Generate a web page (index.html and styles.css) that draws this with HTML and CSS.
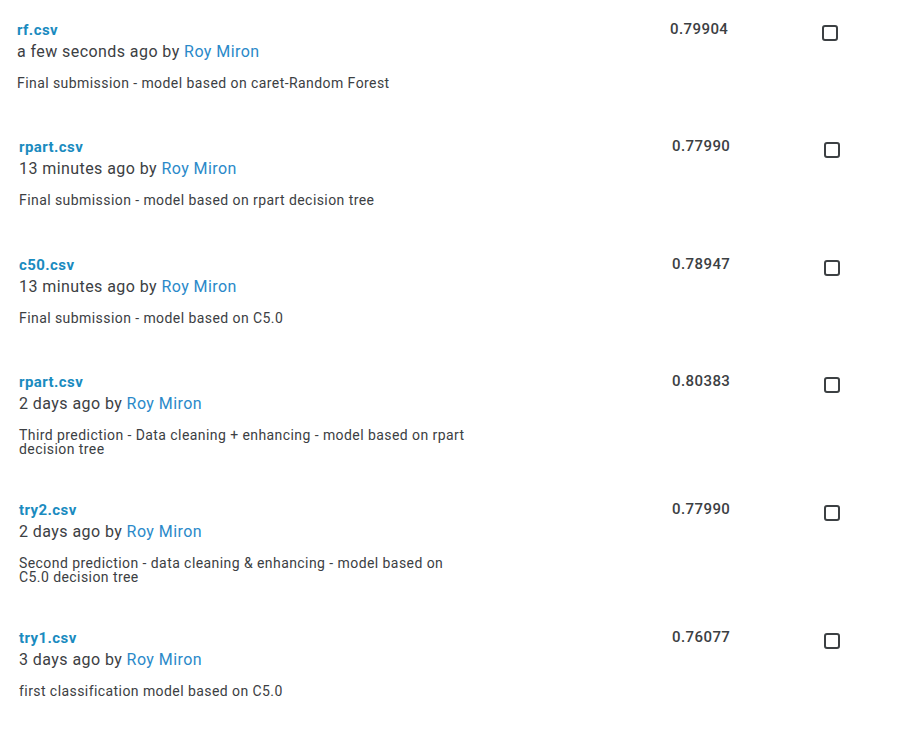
FILE: index.html
```html
<!DOCTYPE html>
<html>
<head>
<meta charset="utf-8">
<link rel="stylesheet" href="styles.css">
</head>
<body>
<div class="list">
  <div class="row row-first">
    <div class="info">
      <a class="file">rf.csv</a>
      <div class="meta">a few seconds ago by <a class="user">Roy Miron</a></div>
      <div class="desc">Final submission - model based on caret-Random Forest</div>
    </div>
    <div class="score">0.79904</div>
    <div class="check"><span class="box"></span></div>
  </div>
  <div class="row">
    <div class="info">
      <a class="file">rpart.csv</a>
      <div class="meta">13 minutes ago by <a class="user">Roy Miron</a></div>
      <div class="desc">Final submission - model based on rpart decision tree</div>
    </div>
    <div class="score">0.77990</div>
    <div class="check"><span class="box"></span></div>
  </div>
  <div class="row">
    <div class="info">
      <a class="file">c50.csv</a>
      <div class="meta">13 minutes ago by <a class="user">Roy Miron</a></div>
      <div class="desc">Final submission - model based on C5.0</div>
    </div>
    <div class="score">0.78947</div>
    <div class="check"><span class="box"></span></div>
  </div>
  <div class="row">
    <div class="info">
      <a class="file">rpart.csv</a>
      <div class="meta">2 days ago by <a class="user">Roy Miron</a></div>
      <div class="desc">Third prediction - Data cleaning + enhancing - model based on rpart decision tree</div>
    </div>
    <div class="score">0.80383</div>
    <div class="check"><span class="box"></span></div>
  </div>
  <div class="row">
    <div class="info">
      <a class="file">try2.csv</a>
      <div class="meta">2 days ago by <a class="user">Roy Miron</a></div>
      <div class="desc">Second prediction - data cleaning &amp; enhancing - model based on C5.0 decision tree</div>
    </div>
    <div class="score">0.77990</div>
    <div class="check"><span class="box"></span></div>
  </div>
  <div class="row">
    <div class="info">
      <a class="file">try1.csv</a>
      <div class="meta">3 days ago by <a class="user">Roy Miron</a></div>
      <div class="desc">first classification model based on C5.0</div>
    </div>
    <div class="score">0.76077</div>
    <div class="check"><span class="box"></span></div>
  </div>
</div>
</body>
</html>
```

FILE: styles.css
```css
html, body {
  margin: 0;
  padding: 0;
  background: #ffffff;
}
body {
  font-family: Roboto, "Liberation Sans", sans-serif;
  color: #3c4043;
  letter-spacing: 0.43px;
}
.list {
  display: flex;
  flex-direction: column;
  padding-top: 19px;
}
.row {
  box-sizing: border-box;
  display: grid;
  grid-template-columns: 654px 151px 16px;
  align-items: start;
  min-height: 117.3px;
  padding-left: 19px;
  padding-bottom: 43px;
}
.row-first {
  padding-left: 17px;
}
.info {
  display: flex;
  flex-direction: column;
}
.file {
  font-size: 15px;
  line-height: 22px;
  font-weight: 700;
  color: #1a8bbf;
  text-decoration: none;
}
.meta {
  font-size: 16px;
  line-height: 21px;
  color: #3c4043;
}
.user {
  color: #2a89c9;
  text-decoration: none;
}
.desc {
  margin-top: 14px;
  font-size: 14px;
  line-height: 14px;
  color: #3c4043;
  max-width: 452px;
}
.score {
  font-size: 15px;
  line-height: 16px;
  font-weight: 500;
  color: #3c4043;
  padding-top: 2px;
  margin-left: -1px;
}
.check {
  padding-top: 6px;
}
.box {
  display: block;
  width: 12px;
  height: 12px;
  border: 2px solid #3c4043;
  border-radius: 3px;
}
```
